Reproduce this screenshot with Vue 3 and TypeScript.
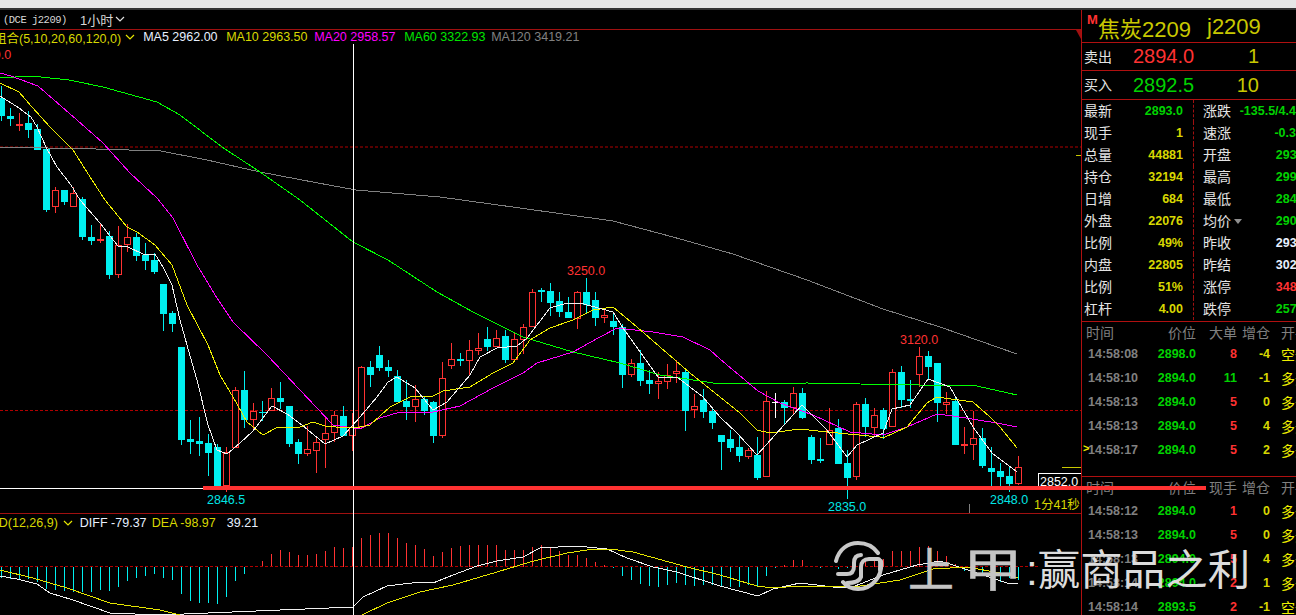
<script setup lang="ts">
type Candle = [number, number, number, number, number, number]

// up flag (1 = red), high, body top, body bottom, low, in page pixels
const raw: Candle[] = [
  [0,86,98,116,121,0],[0,108,116,119,126,1],[1,113,124,126,131,2],[0,111,123,130,138,3],[0,124,129,150,150,4],
  [0,149,149,210,212,5],[1,187,190,207,213,6],[0,190,190,202,205,7],[1,187,193,207,207,8],[0,197,199,237,240,9],
  [0,225,237,241,245,10],[1,223,239,241,243,11],[0,231,236,275,279,12],[1,226,245,275,278,13],[1,224,237,245,252,14],
  [0,233,237,256,261,15],[0,243,255,261,270,16],[0,253,260,272,274,17],[0,284,284,314,331,18],[0,311,313,324,332,19],
  [0,347,347,440,445,20],[0,420,439,442,454,21],[0,417,441,444,456,22],[0,434,443,453,476,23],[0,444,447,486,486,24],
  [1,447,452,486,492,25],[1,387,390,448,448,26],[0,371,390,420,428,27],[1,403,411,420,430,28],[0,401,412,413,421,29],
  [1,388,398,411,411,30],[0,382,398,402,409,31],[0,406,406,444,447,32],[0,439,442,454,464,33],[1,426,449,454,456,34],
  [1,436,442,451,473,35],[1,418,433,440,468,36],[1,411,415,433,442,37],[0,406,416,436,436,38],[1,413,427,436,451,39],
  [1,366,367,427,428,40],[0,361,367,375,387,41],[0,346,355,368,371,42],[0,360,367,371,377,43],[0,370,376,402,402,44],
  [0,380,401,407,420,45],[1,385,399,407,422,46],[0,396,399,411,415,47],[0,401,402,436,443,48],[1,362,378,436,438,49],
  [1,343,359,366,369,50],[0,353,359,361,366,51],[1,340,350,361,376,52],[1,333,348,351,355,53],[0,327,339,347,351,54],
  [1,330,338,347,347,55],[0,330,336,360,363,56],[1,332,339,360,360,57],[1,324,327,340,354,58],[1,289,292,327,327,59],
  [0,288,290,292,302,60],[0,283,291,303,316,61],[0,292,301,312,317,62],[0,297,312,318,318,63],[1,291,292,319,329,64],
  [0,278,292,305,314,65],[0,292,300,318,326,66],[1,308,315,318,323,67],[0,314,321,327,335,68],[0,324,327,375,388,69],
  [1,359,363,375,377,70],[0,350,363,381,386,71],[0,370,380,384,394,72],[1,372,381,384,399,73],[1,364,375,382,389,74],
  [1,360,371,374,383,75],[0,369,372,411,431,76],[1,394,406,410,418,77],[0,389,400,412,418,78],[0,409,411,423,429,79],
  [0,435,435,442,470,80],[0,430,439,448,452,81],[0,436,447,456,462,82],[1,448,450,457,459,83],[0,437,455,478,480,84],
  [1,391,401,477,477,85],[2,393,402,403,418,86],[0,400,402,408,425,87],[1,387,393,408,414,88],[0,388,393,418,419,89],
  [0,435,437,460,464,90],[0,438,459,461,463,91],[1,408,430,445,445,92],[0,419,428,464,464,93],[0,450,463,478,499,94],
  [1,402,404,477,480,95],[0,398,404,427,437,96],[1,408,415,428,437,97],[0,408,410,429,439,98],[1,369,372,427,427,99],
  [0,366,372,400,408,100],[0,380,399,401,408,101],[1,347,356,375,387,102],[0,351,356,367,380,103],[0,363,363,403,422,104],
  [1,392,402,405,414,105],[0,396,401,445,445,106],[1,427,444,446,454,107],[1,411,438,445,460,108],[0,428,438,466,468,109],
  [0,447,468,472,486,110],[0,463,471,477,486,111],[0,467,476,484,492,112],[1,456,467,484,485,113],
]

const candles = raw.map(([kind, high, top, bottom, low, k]) => ({
  k,
  x: 1 + k * 9,
  color: kind === 1 ? '#ff3232' : kind === 2 ? '#ffffff' : '#00f0f0',
  hollow: kind === 1,
  high,
  top,
  bottom,
  low,
}))

const ma5 = '0,96 19,108 31,117 37,127 46,147 57,167 71,185 80,200 87,208 100,223 110,236 118,246 128,247 143,254 155,254 163,267 172,285 180,320 187,345 197,380 208,425 217,450 227,454 240,443 253,431 272,406 287,414 302,425 325,444 343,436 360,417 377,397 388,382 397,377 415,388 433,410 447,402 470,375 480,357 497,348 517,346 527,338 550,308 567,303 580,303 613,312 623,328 653,370 658,377 677,377 703,397 720,417 737,433 757,455 802,405 827,430 847,457 857,445 883,433 892,409 910,405 928,379 950,387 973,427 992,453 1017,472'
const ma10 = '0,83 19,92 32,107 50,127 73,150 92,180 105,200 127,227 137,232 155,245 172,265 187,305 208,345 220,375 233,397 247,422 263,435 278,427 300,427 313,422 325,426 347,428 360,427 370,425 390,407 410,397 433,396 443,391 470,387 493,373 513,363 530,340 550,328 573,320 593,310 613,307 637,327 660,347 690,373 720,397 740,413 757,430 770,433 800,429 827,432 880,437 883,438 907,427 927,403 937,397 973,402 990,417 1000,427 1017,448'
const ma20 = '0,73 11,76 38,86 77,120 103,143 130,173 157,198 173,218 197,265 217,298 233,322 267,355 300,390 333,425 360,429 380,418 400,412 433,412 460,406 493,388 523,373 537,363 573,352 600,337 617,328 653,332 683,337 710,350 720,359 758,391 780,403 813,415 850,432 883,435 907,427 937,414 953,416 997,423 1017,427'
const ma60 = '0,78 31,76 69,80 103,87 157,102 180,115 222,147 260,172 300,200 353,242 388,260 437,292 473,312 523,337 573,352 620,363 660,375 720,384 807,383 860,384 977,386 1017,395'
const ma120 = '0,147 96,149 161,151 207,160 260,172 318,183 356,190 440,197 520,208 613,221 673,237 733,254 807,280 883,309 940,327 1017,354'
const diff = '0,576 17,579 37,584 50,593 73,600 110,613 160,615 353,607 363,597 387,586 420,582 433,583 453,575 477,566 497,561 523,557 540,548 577,546 607,549 627,558 653,567 677,572 720,586 758,596 773,589 800,583 833,587 850,588 883,575 917,565 940,561 953,565 983,575 1007,583 1018,583'
const dea = '0,570 33,578 67,588 110,603 160,610 180,615 362,615 387,603 420,592 453,585 497,572 530,562 567,553 587,550 610,549 633,552 687,567 720,575 757,586 773,588 800,586 860,586 900,580 933,569 967,567 1000,573 1018,578'

// bar tip per candle column, the zero line sits at y=567
const macdTips = [578,579,579,579,582,589,590,591,592,592,592,590,591,587,581,578,576,574,578,580,594,601,603,603,604,597,581,574,567,561,554,550,552,555,555,554,551,547,548,547,538,535,533,533,538,543,545,549,556,552,548,546,545,545,545,545,550,550,550,547,545,547,551,555,555,558,562,565,568,576,580,584,586,587,585,583,585,586,585,585,586,587,587,585,586,576,568,565,560,560,566,568,567,569,568,567,560,558,559,551,551,551,547,546,551,556,564,571,572,575,575,582,578,580]
const macdBars = macdTips.map((tip, k) => ({
  x: 1 + k * 9,
  y: Math.min(tip, 567),
  h: Math.max(Math.abs(tip - 567), 0),
  color: tip < 567 ? '#ff3232' : '#00f0f0',
}))

const stats = [
  { l: '最新', v: '2893.0', c: 'green', r: '涨跌', w: '-135.5/4.47%', d: 'green' },
  { l: '现手', v: '1', c: 'yellow', r: '速涨', w: '-0.35%', d: 'green' },
  { l: '总量', v: '44881', c: 'yellow', r: '开盘', w: '2930.0', d: 'green' },
  { l: '持仓', v: '32194', c: 'yellow', r: '最高', w: '2995.0', d: 'green' },
  { l: '日增', v: '684', c: 'yellow', r: '最低', w: '2847.0', d: 'green' },
  { l: '外盘', v: '22076', c: 'yellow', r: '均价', w: '2909.0', d: 'green', caret: true },
  { l: '比例', v: '49%', c: 'yellow', r: '昨收', w: '2936.0', d: 'white' },
  { l: '内盘', v: '22805', c: 'yellow', r: '昨结', w: '3028.5', d: 'white' },
  { l: '比例', v: '51%', c: 'yellow', r: '涨停', w: '3482.0', d: 'red' },
  { l: '杠杆', v: '4.00', c: 'yellow', r: '跌停', w: '2574.0', d: 'green' },
]

const bigTicks = [
  { t: '14:58:08', p: '2898.0', n: '8', nc: 'red', i: '-4', o: '空开' },
  { t: '14:58:10', p: '2894.0', n: '11', nc: 'green', i: '-1', o: '多开' },
  { t: '14:58:13', p: '2894.0', n: '5', nc: 'red', i: '0', o: '多开' },
  { t: '14:58:13', p: '2894.0', n: '5', nc: 'red', i: '4', o: '多开' },
  { t: '14:58:17', p: '2894.0', n: '5', nc: 'red', i: '2', o: '多开', mark: true },
]
const allTicks = [
  { t: '14:58:12', p: '2894.0', n: '1', nc: 'red', i: '0', o: '多开' },
  { t: '14:58:13', p: '2894.0', n: '5', nc: 'red', i: '0', o: '多开' },
  { t: '14:58:13', p: '2894.0', n: '5', nc: 'red', i: '4', o: '多开' },
  { t: '14:58:14', p: '2894.0', n: '2', nc: 'red', i: '1', o: '多开' },
  { t: '14:58:14', p: '2893.5', n: '2', nc: 'red', i: '-1', o: '空开' },
]
const tables = [
  { head: '大单', rows: bigTicks },
  { head: '现手', rows: allTicks },
]
</script>

<template>
  <div class="screen">
    <div class="topbar"></div>
    <div class="main">
      <section class="chart-col">
        <header class="title">
          <span class="code">(DCE j2209)</span>
          <span class="period">1小时</span>
          <svg class="chev" width="10" height="7" viewBox="0 0 10 7"><path d="M1 1l4 4 4-4" /></svg>
        </header>
        <div class="legend">
          <span class="yellow cut">组合(5,10,20,60,120,0)</span>
          <svg class="chev gold" width="10" height="7" viewBox="0 0 10 7"><path d="M1 1l4 4 4-4" /></svg>
          <span class="white m5">MA5 2962.00</span>
          <span class="yellow m10">MA10 2963.50</span>
          <span class="magenta m20">MA20 2958.57</span>
          <span class="lime m60">MA60 3322.93</span>
          <span class="gray">MA120 3419.21</span>
        </div>

        <svg class="price" width="1081" height="469" viewBox="0 44 1081 469">
          <line class="dash" x1="0" x2="1081" y1="147" y2="147" />
          <line class="dash" x1="0" x2="1081" y1="410.5" y2="410.5" />
          <line x1="0" x2="1081" y1="488.5" y2="488.5" stroke="#fff" />
          <g v-for="c in candles" :key="c.k" shape-rendering="crispEdges">
            <rect :x="c.x" :y="c.high" width="1" :height="c.low - c.high" :fill="c.color" />
            <rect v-if="c.hollow" :x="c.x - 2.5" :y="c.top + 0.5" width="6" :height="Math.max(c.bottom - c.top - 1, 1)" fill="#000" :stroke="c.color" />
            <rect v-else :x="c.x - 3" :y="c.top" width="7" :height="Math.max(c.bottom - c.top, 1)" :fill="c.color" />
          </g>
          <g fill="none" shape-rendering="crispEdges">
            <polyline :points="ma120" stroke="#808080" />
            <polyline :points="ma60" stroke="#00ff00" />
            <polyline :points="ma20" stroke="#ff00ff" />
            <polyline :points="ma10" stroke="#f0f000" />
            <polyline :points="ma5" stroke="#f0f0f0" />
          </g>
          <line x1="1062" x2="1081" y1="467.5" y2="467.5" stroke="#c8c800" />
          <line x1="1076" x2="1081" y1="155.5" y2="155.5" stroke="#c8c800" />
          <line x1="969.5" x2="969.5" y1="504" y2="513" stroke="#808080" />
          <text class="lbl red" x="-27" y="59">3690.0</text>
          <text class="lbl red" x="567" y="275">3250.0</text>
          <text class="lbl red" x="900" y="344">3120.0</text>
          <text class="lbl cyan" x="207" y="504">2846.5</text>
          <text class="lbl cyan" x="828" y="511">2835.0</text>
          <text class="lbl cyan" x="990" y="504">2848.0</text>
          <text class="lbl sec" x="1034" y="509">1分41秒</text>
          <rect x="1038.5" y="473.5" width="43" height="16" fill="#000" stroke="#fff" />
          <text class="lbl" fill="#fff" x="1040" y="486">2852.0</text>
        </svg>

        <div class="legend macd-legend">
          <span class="yellow cut2">MACD(12,26,9)</span>
          <svg class="chev gold" width="10" height="7" viewBox="0 0 10 7"><path d="M1 1l4 4 4-4" /></svg>
          <span class="white diff">DIFF -79.37</span>
          <span class="yellow dea">DEA -98.97</span>
          <span class="white val">39.21</span>
        </div>
        <svg class="macd" width="1081" height="83" viewBox="0 532 1081 83">
          <rect v-for="b in macdBars" :key="b.x" :x="b.x" :y="b.y" width="1" :height="b.h" :fill="b.color" shape-rendering="crispEdges" />
          <line class="dash" x1="0" x2="1040" y1="566.5" y2="566.5" />
          <g fill="none" shape-rendering="crispEdges">
            <polyline :points="diff" stroke="#f0f0f0" />
            <polyline :points="dea" stroke="#e6e600" />
          </g>
        </svg>

        <div class="crosshair"></div>
        <div class="edge-mark"></div>
      </section>

      <aside class="panel">
        <div class="name">
          <span class="m">M</span>
          <span class="cn">焦炭2209</span>
          <span class="sym">j2209</span>
        </div>
        <div class="quote ask">
          <span class="tag">卖出</span>
          <span class="px red">2894.0</span>
          <span class="qty">1</span>
        </div>
        <div class="quote bid">
          <span class="tag">买入</span>
          <span class="px green">2892.5</span>
          <span class="qty">10</span>
        </div>
        <div class="stats">
          <div v-for="s in stats" :key="s.r" class="stat">
            <div class="cell left">
              <span class="tag">{{ s.l }}</span>
              <b :class="s.c">{{ s.v }}</b>
            </div>
            <div class="cell right">
              <span class="tag">{{ s.r }}</span>
              <i v-if="s.caret" class="caret"></i>
              <b :class="s.d">{{ s.w }}</b>
            </div>
          </div>
        </div>
        <div v-for="table in tables" :key="table.head" class="ticks">
          <div class="tick-head">
            <span class="c-time">时间</span>
            <span class="c-price">价位</span>
            <span class="c-num">{{ table.head }}</span>
            <span class="c-inc">增仓</span>
            <span class="c-open">开平</span>
          </div>
          <div v-for="(row, i) in table.rows" :key="i" class="tick-row">
            <i v-if="row.mark" class="mark">&gt;</i>
            <b class="c-time t">{{ row.t }}</b>
            <b class="c-price green">{{ row.p }}</b>
            <b class="c-num" :class="row.nc">{{ row.n }}</b>
            <b class="c-inc yellow">{{ row.i }}</b>
            <span class="c-open bright">{{ row.o }}</span>
          </div>
        </div>
      </aside>
    </div>

    <div class="stroke-mark"></div>
    <div class="watermark">
      <svg class="logo" width="50" height="50" viewBox="0 0 50 50" fill="none">
        <path d="M2 20C5 8 14 2 24 2c8 0 15 3 20 10" />
        <path d="M47 20c2 14-8 28-23 28-6 0-11-2-15-7" />
        <path d="M4 33h9c5 0 7-3 7-8v-3c0-5 2-8 7-8" />
        <path d="M13 42c4 0 12 0 14-6V26c0-5 3-8 8-8h9c3 0 2 6 2 11" />
      </svg>
      <span class="wm-a">上</span>
      <span class="wm-b">甲</span>
      <span class="wm-c">:赢商品之利</span>
    </div>
  </div>
</template>

<style scoped>
.screen {
  position: relative;
  width: 1296px;
  height: 615px;
  overflow: hidden;
  background: #000;
  font-family: "Liberation Sans", "Noto Sans CJK SC", sans-serif;
}

.topbar {
  height: 8px;
  background: #e6e6e6;
  border-bottom: 2px solid #333;
}

.main {
  display: flex;
  height: 605px;
}

.chart-col {
  position: relative;
  width: 1081px;
  flex: none;
  overflow: hidden;
}

.title {
  display: flex;
  align-items: center;
  height: 19px;
  padding-left: 3px;
  color: #d8d8d8;
  border-bottom: 1px solid #a01010;
}

.code {
  width: 77px;
  font-family: "Liberation Mono", monospace;
  font-size: 10.5px;
  letter-spacing: -0.5px;
}

.period {
  font-size: 13px;
  margin-right: 2px;
}

.chev {
  flex: none;
}

.chev path {
  fill: none;
  stroke: #e0e0e0;
  stroke-width: 1.2;
}

.chev.gold path {
  stroke: #e6e600;
}

.legend {
  display: flex;
  align-items: center;
  height: 14px;
  font-size: 12.5px;
  white-space: nowrap;
}

.legend span {
  flex: none;
}

.cut {
  margin-left: -6px;
  margin-right: 4px;
}

.m5 {
  width: 83px;
  margin-left: 8px;
}

.m10 {
  width: 88px;
}

.m20 {
  width: 90px;
}

.m60 {
  width: 87px;
}

.price {
  display: block;
  border-bottom: 1px solid #a01010;
}

.macd-legend {
  height: 18px;
}

.cut2 {
  margin-left: -29px;
  margin-right: 5px;
}

.diff {
  margin-left: 7px;
  width: 72px;
}

.dea {
  width: 75px;
}

.macd {
  display: block;
}

.dash {
  stroke: #b00000;
  stroke-dasharray: 3 2;
}

.lbl {
  font-size: 12.5px;
}

.lbl.red {
  fill: #ff3232;
}

.lbl.cyan {
  fill: #00e6e6;
}

.lbl.sec {
  fill: #d8d800;
}

.crosshair {
  position: absolute;
  left: 353px;
  top: 34px;
  bottom: 0;
  width: 1px;
  background: #fff;
}

.edge-mark {
  position: absolute;
  right: 0;
  top: 20px;
  width: 0;
  height: 0;
  border-top: 9px solid #a01010;
  border-left: 5px solid transparent;
}

.panel {
  flex: 1;
  min-width: 0;
  overflow: hidden;
  border-left: 1px solid #b01010;
  color: #e4e4e4;
}

.name {
  display: flex;
  align-items: center;
  box-sizing: content-box;
  height: 30px;
  padding: 2px 0 0 5px;
  color: #c8c800;
  font-size: 22px;
  white-space: nowrap;
  border-bottom: 1px solid #b01010;
}

.m {
  align-self: flex-start;
  width: 11px;
  color: #ff3232;
  font-size: 13px;
  font-weight: 700;
}

.cn {
  width: 109px;
  flex: none;
}

.quote {
  display: flex;
  align-items: center;
  padding-left: 2px;
  border-bottom: 1px solid #b01010;
}

.ask {
  height: 27px;
}

.bid {
  height: 28px;
}

.tag {
  margin-top: -2px;
  font-size: 14px;
  white-space: nowrap;
}

.quote .tag {
  width: 49px;
}

.px {
  width: 61px;
  font-size: 20px;
}

.qty {
  width: 65px;
  color: #c8c800;
  font-size: 20px;
  text-align: right;
}

.stats {
  width: 232px;
  height: 221px;
  border-bottom: 1px solid #b01010;
}

.stat {
  display: flex;
  height: 22px;
}

.cell {
  display: flex;
  align-items: center;
  height: 22px;
}

.cell b {
  margin-left: auto;
  font-size: 12.5px;
  white-space: nowrap;
}

.left {
  width: 112px;
  padding: 0 10px 0 2px;
  box-sizing: border-box;
  border-right: 1px dashed #a01010;
}

.right {
  flex: 1;
  padding-left: 9px;
}

.caret {
  margin-left: 3px;
  border-top: 5px solid #909090;
  border-left: 4px solid transparent;
  border-right: 4px solid transparent;
}

.ticks {
  position: relative;
  box-sizing: border-box;
  height: 155px;
  border-bottom: 1px solid #b01010;
}

.tick-head {
  display: flex;
  align-items: center;
  box-sizing: border-box;
  height: 20px;
  padding-bottom: 1px;
  color: #808080;
  font-size: 14px;
}

.tick-row {
  position: relative;
  display: flex;
  align-items: center;
  height: 24px;
  font-size: 12.5px;
}

.tick-head > *,
.tick-row > * {
  flex: none;
}

.ticks + .ticks {
  height: 140px;
  border-bottom: 0;
}

.ticks + .ticks .tick-head {
  height: 22px;
  padding-bottom: 2px;
}

.c-time {
  width: 58px;
  padding-left: 6px;
  box-sizing: border-box;
  white-space: nowrap;
}

.tick-head .c-time {
  padding-left: 4px;
}

.c-price {
  width: 56px;
  text-align: right;
}

.c-num {
  width: 41px;
  text-align: right;
}

.c-inc {
  width: 33px;
  text-align: right;
}

.c-open {
  margin-left: 11px;
  font-size: 14px;
  white-space: nowrap;
}

.t {
  color: #808080;
}

.bright {
  color: #f0f000;
}

.mark {
  position: absolute;
  left: 1px;
  top: 4px;
  color: #f0f000;
  font-style: normal;
  font-weight: 700;
  font-size: 11px;
}

/* hand-drawn annotation over the chart */
.stroke-mark {
  position: absolute;
  left: 203px;
  top: 486px;
  width: 1003px;
  height: 4px;
  background: #ff3232;
}

.watermark {
  position: absolute;
  left: 834px;
  top: 541px;
  display: flex;
  align-items: center;
  height: 50px;
  white-space: nowrap;
}

.logo {
  flex: none;
}

.logo path {
  stroke: #c8c8c8;
  stroke-width: 4;
  stroke-linecap: round;
}

.wm-a,
.wm-b {
  color: #c4c4c4;
  font-size: 46px;
  -webkit-text-stroke: 0.5px #c4c4c4;
}

.wm-a {
  margin-left: 24px;
}

.wm-b {
  margin-left: 16px;
  transform: scaleX(1.3);
}

.wm-c {
  margin-left: 10px;
  color: #dcdcdc;
  font-size: 42.5px;
}

.red {
  color: #ff3232;
}

.green {
  color: #00d200;
}

.yellow {
  color: #d8d800;
}

.magenta {
  color: #ff00ff;
}

.lime {
  color: #00e600;
}

.gray {
  color: #808080;
}

.white {
  color: #e8f0ff;
}
</style>
